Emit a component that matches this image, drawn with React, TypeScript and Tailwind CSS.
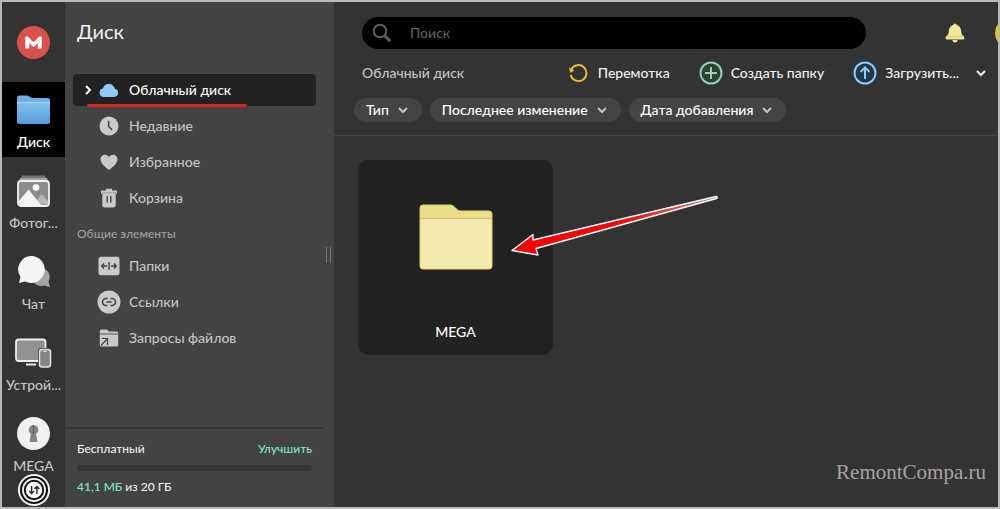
import type { ReactNode } from 'react';
import clsx from 'clsx';

interface IconItem {
  name: string;
  icon: ReactNode;
}

function MegaLogo() {
  return (
    <svg viewBox="0 0 33 33" className="size-[33px]">
      <circle cx="16.5" cy="16.5" r="16.5" fill="#d9534c" />
      <path d="M8.300 22.500V10.500h2.500l5.700 5.700 5.700-5.700h2.500v12h-4V17l-4.200 4.200L12.300 17v5.500z" fill="#fff" />
    </svg>
  );
}

function DriveIcon() {
  return (
    <svg viewBox="0 0 33 30" className="h-[30px] w-[33px]">
      <defs>
        <linearGradient id="drive" x1="0" y1="0" x2="0" y2="1">
          <stop offset="0" stopColor="#84c0f0" />
          <stop offset="1" stopColor="#559cda" />
        </linearGradient>
      </defs>
      <path d="M0 3a2.5 2.5 0 0 1 2.500-2.500h7.500c2.500 0 3 2.500 5.500 2.500h15A2.500 2.500 0 0 1 33 5.500V12H0z" fill="#6fb0e6" />
      <path d="M0 8h33v18.500a2.500 2.500 0 0 1-2.500 2.500h-28A2.500 2.500 0 0 1 0 26.500z" fill="url(#drive)" />
      <path d="M0 7.500h33" stroke="#a9d5f7" strokeWidth="1" />
    </svg>
  );
}

function PhotosIcon() {
  return (
    <svg viewBox="0 0 33 33" className="size-[33px]">
      <path d="M5 1.500h23l1 4H4z" fill="#767676" />
      <path d="M3 4h27l1 4H2z" fill="#a2a2a2" />
      <rect x="1" y="7" width="31" height="25" rx="3" fill="#8c8c8c" stroke="#f2f2f2" strokeWidth="1.800" />
      <path d="M17 30l7.500-10 6.500 7v3.500H17z" fill="#b9b9b9" />
      <path d="M2 27l9.500-11.500L24 31H3.500L2 29.500z" fill="#f5f5f5" />
      <circle cx="19" cy="13.500" r="3.300" fill="#fff" />
    </svg>
  );
}

function ChatIcon() {
  return (
    <svg viewBox="0 0 34 33" className="h-[33px] w-[34px]">
      <path d="M24 13a9 9 0 0 1 7.500 13.500L33 32l-6-1.500A9 9 0 1 1 24 13z" fill="#a5a5a5" />
      <path d="M14 1a13.500 13.500 0 1 1-6 25.500L2 28l1.500-6A13.500 13.500 0 0 1 14 1z" fill="#f4f4f4" />
    </svg>
  );
}

function DevicesIcon() {
  return (
    <svg viewBox="0 0 37 30" className="h-[30px] w-[37px]">
      <rect x="1" y="1.500" width="29.500" height="21.500" rx="2.500" fill="#929292" stroke="#ededed" strokeWidth="1.800" />
      <path d="M11 26.500h10" stroke="#ededed" strokeWidth="2" />
      <rect x="24.500" y="11.500" width="11" height="17.500" rx="2.500" fill="#858585" stroke="#333" strokeWidth="3" />
      <rect x="24.500" y="11.500" width="11" height="17.500" rx="2.500" fill="#858585" stroke="#e3e3e3" strokeWidth="1.500" />
      <path d="M28.500 13.500h3" stroke="#e3e3e3" />
    </svg>
  );
}

function PassIcon() {
  return (
    <svg viewBox="0 0 33 33" className="size-[33px]">
      <circle cx="16.500" cy="16.500" r="16.500" fill="#f1f1f1" />
      <path d="M16.500 8a4.800 4.800 0 0 1 2.600 8.800L20.500 25h-8l1.400-8.200A4.800 4.800 0 0 1 16.500 8z" fill="#858585" />
      <path d="M16.500 8v9" stroke="#666" strokeWidth="1.500" />
    </svg>
  );
}

function TransferIcon() {
  return (
    <svg viewBox="0 0 33 33" className="size-8">
      <circle cx="16.500" cy="16.500" r="16.500" fill="#f5f5f5" />
      <circle cx="16.500" cy="16.500" r="14.500" fill="#111" />
      <circle cx="16.500" cy="16.500" r="12.300" fill="#f5f5f5" />
      <circle cx="16.500" cy="16.500" r="10.500" fill="#111" />
      <circle cx="16.500" cy="16.500" r="8.500" fill="#fff" />
      <path d="M14 12.500v7.500M11.500 17.500 14 20.200l2.500-2.700M19.500 20.500V13M17 15.500l2.500-2.700 2.500 2.700" fill="none" stroke="#222" strokeWidth="1.400" />
    </svg>
  );
}

function CloudIcon() {
  return (
    <svg viewBox="0 0 20 20" className="size-5">
      <path d="M5 17a4.300 4.300 0 0 1-1-8.500A5.800 5.800 0 0 1 14.300 6a5 5 0 0 1 1.500 2.700A4.200 4.200 0 0 1 15.200 17z" fill="#8ecbf7" />
    </svg>
  );
}

function ClockIcon() {
  return (
    <svg viewBox="0 0 20 20" className="size-5">
      <circle cx="10" cy="10" r="9.500" fill="#cacaca" />
      <path d="M9.700 5.500v5l3 3" fill="none" stroke="#444" strokeWidth="1.600" strokeLinecap="round" />
    </svg>
  );
}

function HeartIcon() {
  return (
    <svg viewBox="0 0 20 20" className="size-5">
      <path d="M10 18C6.500 15 1.500 11.500 1.500 7.200 1.500 2.500 7.500 1 10 5c2.500-4 8.500-2.500 8.500 2.200C18.500 11.500 13.500 15 10 18z" fill="#cacaca" />
    </svg>
  );
}

function TrashIcon() {
  return (
    <svg viewBox="0 0 20 20" className="size-5">
      <path d="M7 .8h6v1.700h5v3h-1.300V17a2.500 2.500 0 0 1-2.500 2.500H5.800A2.500 2.500 0 0 1 3.300 17V5.500H2v-3h5z" fill="#cacaca" />
      <path d="M8.200 8v6.500M11.800 8v6.500" stroke="#444" strokeWidth="1.400" />
      <path d="M3 4.800h14" stroke="#777" strokeWidth=".6" />
    </svg>
  );
}

function SharedFolderIcon() {
  return (
    <svg viewBox="0 0 22 20" className="h-5 w-[22px]">
      <rect x=".5" y=".8" width="21" height="18.500" rx="2.500" fill="#cacaca" />
      <path d="M11 6v8M9 10H4m2-2.500L3.700 10 6 12.500M13 10h5m-2-2.500 2.300 2.500-2.300 2.500" fill="none" stroke="#444" strokeWidth="1.400" />
    </svg>
  );
}

function LinkIcon() {
  return (
    <svg viewBox="0 0 24 24" className="size-6">
      <circle cx="12" cy="12" r="11.500" fill="#cacaca" />
      <path d="M10.500 8.500H9a3.500 3.500 0 0 0 0 7h1.500M13.500 8.500H15a3.500 3.500 0 0 1 0 7h-1.500M9.500 12h5" fill="none" stroke="#444" strokeWidth="1.600" />
    </svg>
  );
}

function FileRequestIcon() {
  return (
    <svg viewBox="0 0 20 20" className="size-5">
      <path d="M.8 3A1.500 1.500 0 0 1 2.300 1.500H8l2 2h7.700A1.500 1.500 0 0 1 19.200 5v12a1.500 1.500 0 0 1-1.500 1.500H2.300A1.500 1.500 0 0 1 .8 17z" fill="#cacaca" />
      <path d="M.8 6h18.400" stroke="#555" />
      <path d="M2 17.500 8 11M3 10.500h5.500v6.500" fill="none" stroke="#444" strokeWidth="1.200" />
    </svg>
  );
}

function FolderIcon() {
  return (
    <svg viewBox="0 0 74 66" className="h-[66px] w-[74px]">
      <path d="M1 4a3 3 0 0 1 3-3h27c5 0 6 6 11 6h28a3 3 0 0 1 3 3v52a3 3 0 0 1-3 3H4a3 3 0 0 1-3-3z" fill="#ebdd8a" />
      <path d="M1 15h72v47a3 3 0 0 1-3 3H4a3 3 0 0 1-3-3z" fill="#f2e9ae" />
      <path d="M1 14.500h72" stroke="#d6b95c" />
      <path d="M1 4a3 3 0 0 1 3-3h27c5 0 6 6 11 6h28a3 3 0 0 1 3 3v52a3 3 0 0 1-3 3H4a3 3 0 0 1-3-3z" fill="none" stroke="#e3cf68" />
    </svg>
  );
}

function BellIcon() {
  return (
    <svg viewBox="0 0 20 20" className="size-5">
      <path d="M10 .5a1.700 1.700 0 0 1 1.700 1.500C14.500 2.800 16 5 16.200 8c.2 3 .8 4.300 2.800 5.500.6.500.6 3-.5 3h-17c-1.100 0-1.100-2.500-.5-3C3 12.300 3.600 11 3.800 8 4 5 5.500 2.800 8.300 2A1.700 1.700 0 0 1 10 .5z" fill="#f3e695" />
      <path d="M7.500 17h5a2.500 2.500 0 0 1-5 0z" fill="#f3e695" />
      <path d="M2.500 13.700h15" stroke="#cfbd62" strokeWidth=".7" />
    </svg>
  );
}

function SearchIcon() {
  return (
    <svg viewBox="0 0 20 20" className="size-5 shrink-0">
      <circle cx="8" cy="8" r="6.300" fill="none" stroke="#5f5f5f" strokeWidth="2" />
      <path d="m12.700 12.700 5.600 5.600" stroke="#5f5f5f" strokeWidth="3" />
    </svg>
  );
}

function RewindIcon() {
  return (
    <svg viewBox="0 0 20 20" className="size-5">
      <path d="M3.300 6.500A8 8 0 1 1 2.700 12" fill="none" stroke="#f0bd3a" strokeWidth="1.900" />
      <path d="M.8 4.500 6.300 7.200 2.500 10z" fill="#f0bd3a" />
    </svg>
  );
}

function PlusIcon() {
  return (
    <svg viewBox="0 0 24 24" className="size-6" fill="none" stroke="#98cfac" strokeWidth="2">
      <circle cx="12" cy="12" r="10.500" fill="#2c4136" />
      <path d="M12 6v12M6 12h12" />
    </svg>
  );
}

function UploadIcon() {
  return (
    <svg viewBox="0 0 24 24" className="size-6" fill="none" stroke="#8fcbfa" strokeWidth="2">
      <circle cx="12" cy="12" r="10.500" fill="#22384a" />
      <path d="M12 18V7M7.500 11 12 6.500l4.500 4.500" />
    </svg>
  );
}

function Chevron({ className }: { className?: string }) {
  return (
    <svg viewBox="0 0 10 10" className={clsx('size-[10px] shrink-0', className)} fill="none" stroke="currentColor" strokeWidth="2">
      <path d="m1 3 4 4 4-4" />
    </svg>
  );
}

const rail: IconItem[] = [
  { name: 'Диск', icon: <DriveIcon /> },
  { name: 'Фотог...', icon: <PhotosIcon /> },
  { name: 'Чат', icon: <ChatIcon /> },
  { name: 'Устрой...', icon: <DevicesIcon /> },
  { name: 'MEGA', icon: <PassIcon /> },
];

const driveLinks: IconItem[] = [
  { name: 'Облачный диск', icon: <CloudIcon /> },
  { name: 'Недавние', icon: <ClockIcon /> },
  { name: 'Избранное', icon: <HeartIcon /> },
  { name: 'Корзина', icon: <TrashIcon /> },
];

const sharedLinks: IconItem[] = [
  { name: 'Папки', icon: <SharedFolderIcon /> },
  { name: 'Ссылки', icon: <LinkIcon /> },
  { name: 'Запросы файлов', icon: <FileRequestIcon /> },
];

const filters = ['Тип', 'Последнее изменение', 'Дата добавления'];

function Rail() {
  return (
    <nav className="flex w-[63px] shrink-0 flex-col items-center bg-[#333] pb-px">
      <a href="#home" aria-label="MEGA" className="flex h-20 items-center">
        <MegaLogo />
      </a>
      <div className="flex w-full flex-col gap-1.5">
        {rail.map((item, i) => (
          <a
            key={item.name}
            href="#section"
            className={clsx(
              'flex flex-col items-center whitespace-nowrap pt-[11px] text-sm font-medium',
              i === 0 ? 'bg-black text-white' : 'text-[#c4c4c4]',
              i < rail.length - 1 && 'pb-[7px]',
            )}
          >
            <span className="flex h-[33px] items-center">{item.icon}</span>
            <span className="mt-2 leading-4">{item.name}</span>
          </a>
        ))}
      </div>
      <button type="button" aria-label="Передачи" className="mt-auto">
        <TransferIcon />
      </button>
    </nav>
  );
}

function SideLink({ item, active }: { item: IconItem; active?: boolean }) {
  return (
    <a
      href="#folder"
      className={clsx(
        'relative flex h-8 items-center rounded pl-2.5 text-sm font-medium',
        active ? 'bg-[#222] text-white' : 'text-[#c4c4c4]',
      )}
    >
      <span className="w-3.5">{active && <Chevron className="-rotate-90" />}</span>
      <span className="flex w-6 justify-center">{item.icon}</span>
      <span className="ml-2">{item.name}</span>
      {active && <span className="absolute -bottom-px left-3.5 h-[3px] w-40 rounded bg-[#d9231f]" />}
    </a>
  );
}

function Sidebar() {
  return (
    <aside className="relative flex w-[269px] shrink-0 flex-col bg-[#434343]">
      <h1 className="px-3 pt-[15px] text-xl leading-7 text-[#f0f0f0]">Диск</h1>
      <div className="mt-[29px] flex flex-col gap-1 pl-2 pr-[18px]">
        {driveLinks.map((item, i) => (
          <SideLink key={item.name} item={item} active={i === 0} />
        ))}
      </div>
      <h2 className="px-3 pb-2 pt-3 text-xs leading-4 font-medium text-[#a0a0a0]">Общие элементы</h2>
      <div className="flex flex-col gap-1 pl-2 pr-[18px]">
        {sharedLinks.map((item) => (
          <SideLink key={item.name} item={item} />
        ))}
      </div>
      <div className="mr-2.5 mt-auto border-t-2 border-[#353535] p-3 text-xs leading-4 font-medium text-[#f0f0f0]">
        <div className="flex justify-between">
          <span>Бесплатный</span>
          <a href="#upgrade" className="text-[#7fe5c6]">Улучшить</a>
        </div>
        <div className="my-2 h-1.5 rounded-full bg-[#353535]" />
        <p>
          <span className="text-[#7fe5c6]">41,1 МБ</span> из 20 ГБ
        </p>
      </div>
      <span className="absolute right-[3px] top-[245px] h-4 w-[5px] border-x border-[#757575]" />
    </aside>
  );
}

function Header() {
  return (
    <header className="flex items-center pl-7 pt-[15px]">
      <label className="flex h-8 flex-1 items-center gap-[18px] rounded-full bg-black px-2.5">
        <SearchIcon />
        <input
          type="search"
          aria-label="Поиск"
          placeholder="Поиск"
          className="min-w-0 flex-1 bg-transparent text-sm font-medium text-white outline-none placeholder:text-[#5f5f5f]"
        />
      </label>
      <button type="button" aria-label="Уведомления" className="ml-[79px]">
        <BellIcon />
      </button>
      <button type="button" aria-label="Профиль" className="-mr-[29px] ml-[30px] size-8 shrink-0 rounded-full bg-[#f5bd1f]" />
    </header>
  );
}

function Toolbar() {
  return (
    <div className="flex h-12 items-center justify-between pl-7 pr-3 text-sm font-medium text-[#f0f0f0]">
      <a href="#cloud" className="text-[#c4c4c4]">Облачный диск</a>
      <div className="flex items-center gap-[29px]">
        <button type="button" className="flex items-center gap-2.5">
          <RewindIcon />
          Перемотка
        </button>
        <button type="button" className="flex items-center gap-2">
          <PlusIcon />
          Создать папку
        </button>
        <button type="button" className="flex items-center gap-2">
          <UploadIcon />
          Загрузить...
          <Chevron className="ml-[9px]" />
        </button>
      </div>
    </div>
  );
}

function Filters() {
  return (
    <div className="flex gap-2 border-b border-[#424242] pb-[13px] pl-5 pt-px text-sm font-medium">
      {filters.map((name) => (
        <button key={name} type="button" className="flex h-6 items-center gap-[9px] rounded-full bg-[#444] pl-3 pr-3.5 text-white">
          {name}
          <Chevron className="text-[#c4c4c4]" />
        </button>
      ))}
    </div>
  );
}

export default function App() {
  return (
    <div className="relative flex min-h-screen border-2 border-[#b9b9b9] bg-[#333] font-['Lato','Noto_Sans',sans-serif]">
      <Rail />
      <Sidebar />
      <main className="relative flex min-w-0 flex-1 flex-col overflow-hidden">
        <Header />
        <Toolbar />
        <Filters />
        <section className="px-6 pt-6">
          <a href="#mega" className="flex h-[195px] w-[195px] flex-col items-center rounded-[10px] bg-[#222] pt-11 text-sm font-medium text-white">
            <FolderIcon />
            <span className="mt-[52px]">MEGA</span>
          </a>
        </section>
        <svg viewBox="0 0 210 62" className="absolute left-[176px] top-[192px] h-[62px] w-[210px]">
          <defs>
            <linearGradient id="arrow" x1="0" x2="1">
              <stop offset=".5" stopColor="#fb0000" />
              <stop offset="1" stopColor="#b98080" />
            </linearGradient>
          </defs>
          <path
            d="M2 56.500 23 40.500 23 46 206 2.500a1 1 0 0 1 .5 2L26 54.500 28 61z"
            fill="url(#arrow)"
            stroke="#fff"
            strokeWidth="1.300"
            strokeLinejoin="round"
          />
        </svg>
        <p className="mt-auto pb-[21px] pr-3 text-right font-['Liberation_Serif',serif] text-[21px] leading-7 text-[#aaa2a2]">RemontCompa.ru</p>
      </main>
    </div>
  );
}
